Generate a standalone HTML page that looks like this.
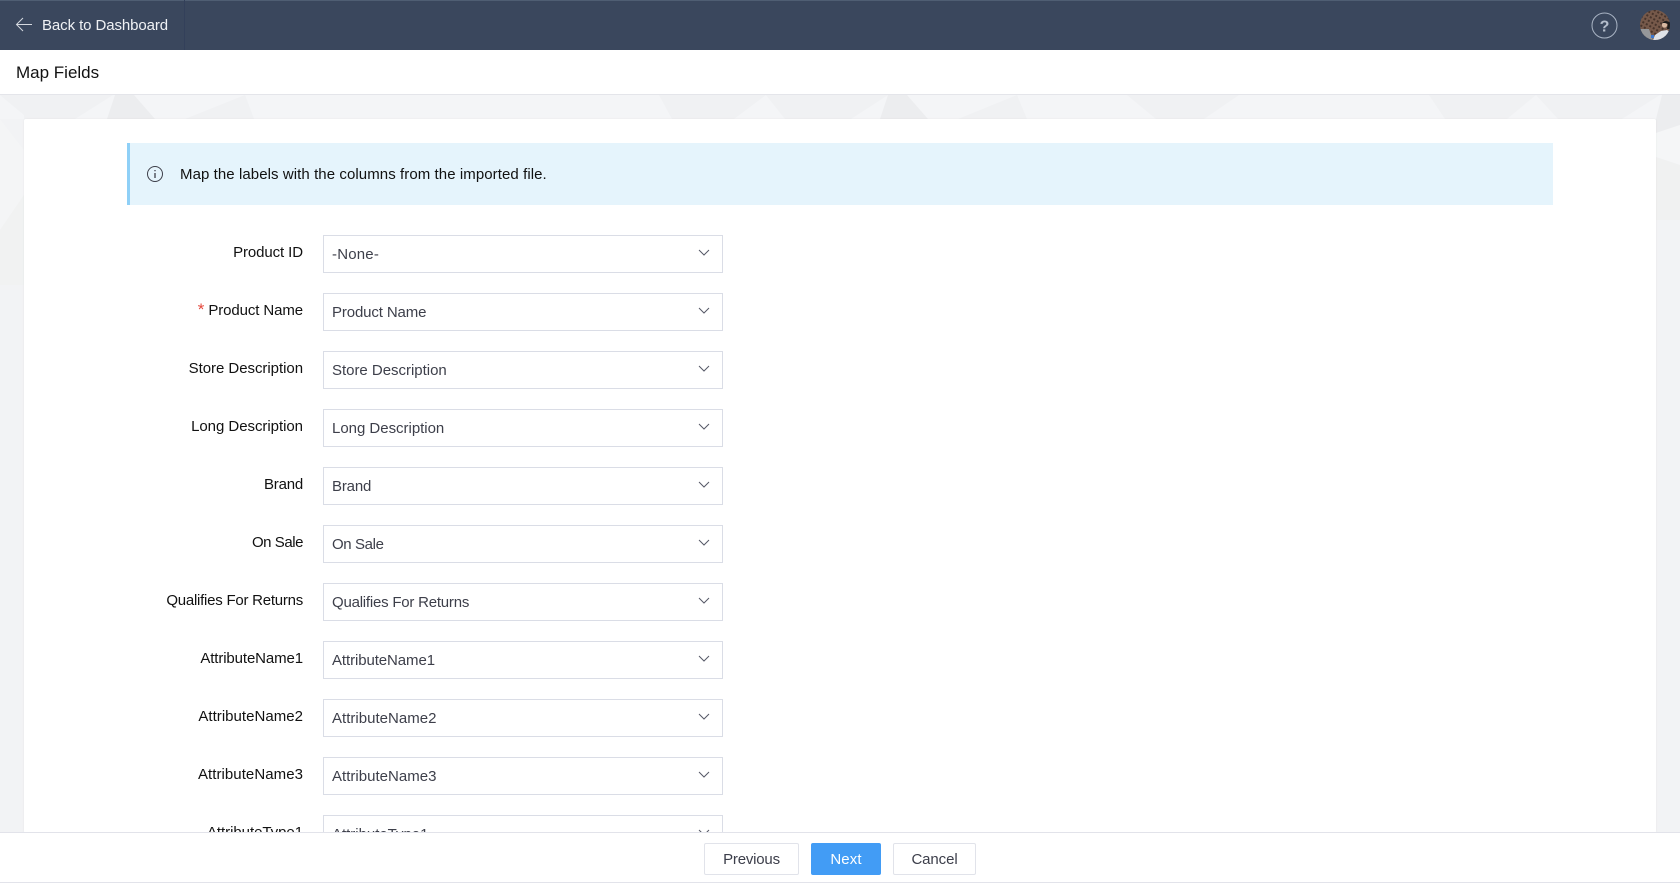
<!DOCTYPE html>
<html lang="en"><head><meta charset="utf-8"><title>Map Fields</title>
<style>
*{box-sizing:border-box}
html,body{margin:0;padding:0;width:1680px;height:886px;overflow:hidden;background:#f2f3f5;font-family:"Liberation Sans",sans-serif;color:#111}
.abs{position:absolute}
#top{left:0;top:0;width:1680px;height:50px;background:#3a475d;border-top:1px solid #4f5e73}
#sep{left:184px;top:0;width:1px;height:50px;background:#33405a}
#back{left:42px;top:1px;height:50px;line-height:50px;color:#f0f2f5;font-size:15px;letter-spacing:-.09px;white-space:nowrap}
#bar{left:0;top:50px;width:1680px;height:45px;background:#fff;border-bottom:1px solid #e4e5ea}
#title{left:16px;top:51px;height:44px;line-height:44px;font-size:17px;letter-spacing:0;color:#111}
#bg{left:0;top:95px}
#card{left:24px;top:119px;width:1632px;height:714px;background:#fff;border-radius:2px;box-shadow:0 0 2px rgba(0,0,0,.06)}
#info{left:127px;top:143px;width:1426px;height:62px;background:#e5f4fc;border-left:3px solid #8fd0f7}
#infotxt{left:180px;top:144px;height:62px;line-height:61px;font-size:15px;letter-spacing:.075px;color:#111;white-space:nowrap}
.lab{position:absolute;left:120px;width:183px;text-align:right;font-size:15px;letter-spacing:-.1px;height:20px;line-height:20px;color:#111;white-space:nowrap}
.lab i{color:#e5483c;font-style:normal;font-size:17px;line-height:17px}
.sel{position:absolute;left:323px;width:400px;height:38px;border:1px solid #dadde6;background:#fff;font-size:15px;letter-spacing:-.08px;line-height:37px;padding-left:8px;color:#3d3f4a;white-space:nowrap}
.sel svg{position:absolute;right:12px;top:13px}
#foot{left:0;top:832px;width:1680px;height:51px;background:#fff;border-top:1px solid #e2e3ea;border-bottom:1px solid #e2e3ea}
#under{left:0;top:883px;width:1680px;height:3px;background:#fff}
.btn{position:absolute;top:843px;height:32px;line-height:31px;text-align:center;font-size:15px;border:1px solid #e1e3ea;border-radius:2px;background:#fff;color:#3c3e4a}
</style></head><body>
<svg id="bg" class="abs" width="1680" height="740" viewBox="0 0 1680 740">
<rect width="1680" height="740" fill="#f2f3f5"/>
<rect width="1680" height="24" fill="#f4f5f7"/>
<g fill="#f0f1f3">
<polygon points="0,0 113,0 75,24 24,24 24,20 0,0"/>
<polygon points="185,24 245,0 254,24"/>
<polygon points="659,0 672,24 734,24 766,0"/>
<polygon points="766,0 785,24 851,24 888,0"/>
<polygon points="958,24 1017,0 1027,24"/>
<polygon points="1127,0 1156,24 1204,24 1239,0"/>
<polygon points="1429,0 1445,24 1507,24 1536,0"/>
<polygon points="1536,0 1558,24 1622,24 1660,0"/>
</g>
<g fill="#ecedef">
<polygon points="115,0 134,0 155,24 107,24"/>
<polygon points="888,0 907,0 928,24 880,24"/>
<polygon points="1662,0 1680,0 1680,30 1656,38 1656,24"/>
</g>
<polygon points="1656,38 1680,30 1680,70 1656,62" fill="#f5f6f7"/>
<polygon points="1656,62 1680,70 1680,125 1656,125" fill="#f0f1f1"/>
<polygon points="0,24 24,55 24,120 0,135" fill="#f4f5f6"/>
<polygon points="0,135 24,100 24,190 0,190" fill="#f1f2f2"/>
</svg>
<div id="card" class="abs"></div>
<div id="info" class="abs"></div>
<svg class="abs" style="left:146px;top:165px" width="18" height="18" viewBox="0 0 18 18" fill="none" stroke="#3d3f4a" stroke-width="1"><circle cx="9" cy="9" r="7.5"/><path d="M9 8v5M9 5v1.3" stroke-width="1.3"/></svg>
<div id="infotxt" class="abs">Map the labels with the columns from the imported file.</div>

<div class="lab" style="top:243px">Product ID</div><div class="sel" style="top:235px;letter-spacing:.2px">-None-<svg width="12" height="8" viewBox="0 0 12 8" fill="none" stroke="#555866" stroke-width="1"><path d="M1 1l5 5 5-5"/></svg></div>
<div class="lab" style="top:301px"><i>*</i> Product Name</div><div class="sel" style="top:293px;letter-spacing:-.13px">Product Name<svg width="12" height="8" viewBox="0 0 12 8" fill="none" stroke="#555866" stroke-width="1"><path d="M1 1l5 5 5-5"/></svg></div>
<div class="lab" style="top:359px;letter-spacing:-.04px">Store Description</div><div class="sel" style="top:351px;letter-spacing:-.02px">Store Description<svg width="12" height="8" viewBox="0 0 12 8" fill="none" stroke="#555866" stroke-width="1"><path d="M1 1l5 5 5-5"/></svg></div>
<div class="lab" style="top:417px;letter-spacing:-.04px">Long Description</div><div class="sel" style="top:409px;letter-spacing:-.02px">Long Description<svg width="12" height="8" viewBox="0 0 12 8" fill="none" stroke="#555866" stroke-width="1"><path d="M1 1l5 5 5-5"/></svg></div>
<div class="lab" style="top:475px;letter-spacing:-.2px">Brand</div><div class="sel" style="top:467px;letter-spacing:-.16px">Brand<svg width="12" height="8" viewBox="0 0 12 8" fill="none" stroke="#555866" stroke-width="1"><path d="M1 1l5 5 5-5"/></svg></div>
<div class="lab" style="top:533px;letter-spacing:-.45px">On Sale</div><div class="sel" style="top:525px;letter-spacing:-.38px">On Sale<svg width="12" height="8" viewBox="0 0 12 8" fill="none" stroke="#555866" stroke-width="1"><path d="M1 1l5 5 5-5"/></svg></div>
<div class="lab" style="top:591px;letter-spacing:-.24px">Qualifies For Returns</div><div class="sel" style="top:583px;letter-spacing:-.22px">Qualifies For Returns<svg width="12" height="8" viewBox="0 0 12 8" fill="none" stroke="#555866" stroke-width="1"><path d="M1 1l5 5 5-5"/></svg></div>
<div class="lab" style="top:649px;letter-spacing:-.11px">AttributeName1</div><div class="sel" style="top:641px;letter-spacing:-.09px">AttributeName1<svg width="12" height="8" viewBox="0 0 12 8" fill="none" stroke="#555866" stroke-width="1"><path d="M1 1l5 5 5-5"/></svg></div>
<div class="lab" style="top:707px;letter-spacing:.03px">AttributeName2</div><div class="sel" style="top:699px;letter-spacing:.02px">AttributeName2<svg width="12" height="8" viewBox="0 0 12 8" fill="none" stroke="#555866" stroke-width="1"><path d="M1 1l5 5 5-5"/></svg></div>
<div class="lab" style="top:765px;letter-spacing:.06px">AttributeName3</div><div class="sel" style="top:757px;letter-spacing:.02px">AttributeName3<svg width="12" height="8" viewBox="0 0 12 8" fill="none" stroke="#555866" stroke-width="1"><path d="M1 1l5 5 5-5"/></svg></div>
<div class="lab" style="top:823px;letter-spacing:-.05px">AttributeType1</div><div class="sel" style="top:815px;letter-spacing:-.02px">AttributeType1<svg width="12" height="8" viewBox="0 0 12 8" fill="none" stroke="#555866" stroke-width="1"><path d="M1 1l5 5 5-5"/></svg></div>

<div id="foot" class="abs"></div>
<div id="under" class="abs"></div>
<div class="btn" style="left:704px;width:95px;letter-spacing:-.2px">Previous</div>
<div class="btn" style="left:811px;width:70px;background:#429cf5;border-color:#429cf5;color:#fff;letter-spacing:.1px">Next</div>
<div class="btn" style="left:893px;width:83px;letter-spacing:-.1px">Cancel</div>

<div id="bar" class="abs"></div>
<div id="title" class="abs">Map Fields</div>
<div id="top" class="abs"></div>
<div id="sep" class="abs"></div>
<svg class="abs" style="left:15px;top:16px" width="18" height="18" viewBox="0 0 18 18" fill="none" stroke="#d5d9e0" stroke-width="1"><path d="M17 8.5H1.5M8 2L1.5 8.5l6.5 6.5"/></svg>
<div id="back" class="abs">Back to Dashboard</div>
<svg class="abs" style="left:1591px;top:12px" width="27" height="27" viewBox="0 0 27 27" fill="none"><circle cx="13.5" cy="13.5" r="12.5" stroke="#a9b4c4" stroke-width="1"/><text x="13.5" y="19.5" text-anchor="middle" font-family="Liberation Sans" font-weight="700" font-size="16" fill="#b4bdcb">?</text></svg>
<svg class="abs" style="left:1640px;top:10px" width="30" height="30" viewBox="0 0 30 30"><defs><clipPath id="c"><circle cx="15" cy="15" r="15"/></clipPath><pattern id="p" width="4" height="4" patternUnits="userSpaceOnUse" patternTransform="rotate(30)"><rect width="4" height="4" fill="#76594a"/><rect width="2" height="2" fill="#47342b"/></pattern></defs><g clip-path="url(#c)"><rect width="30" height="30" fill="url(#p)"/><polygon points="0,19 9,19 13,30 0,30" fill="#95979a"/><polygon points="13,30 15,25 21,21 27,20 30,22 30,30" fill="#dfe3e8"/><circle cx="24.5" cy="15" r="2.6" fill="#d8b8a0"/><path d="M22 13l3-2 5 1v7h-3l1-5-3-1z" fill="#1c1c1c"/><rect x="11" y="25" width="3" height="3" fill="#3b78d0"/></g></svg>
</body></html>
